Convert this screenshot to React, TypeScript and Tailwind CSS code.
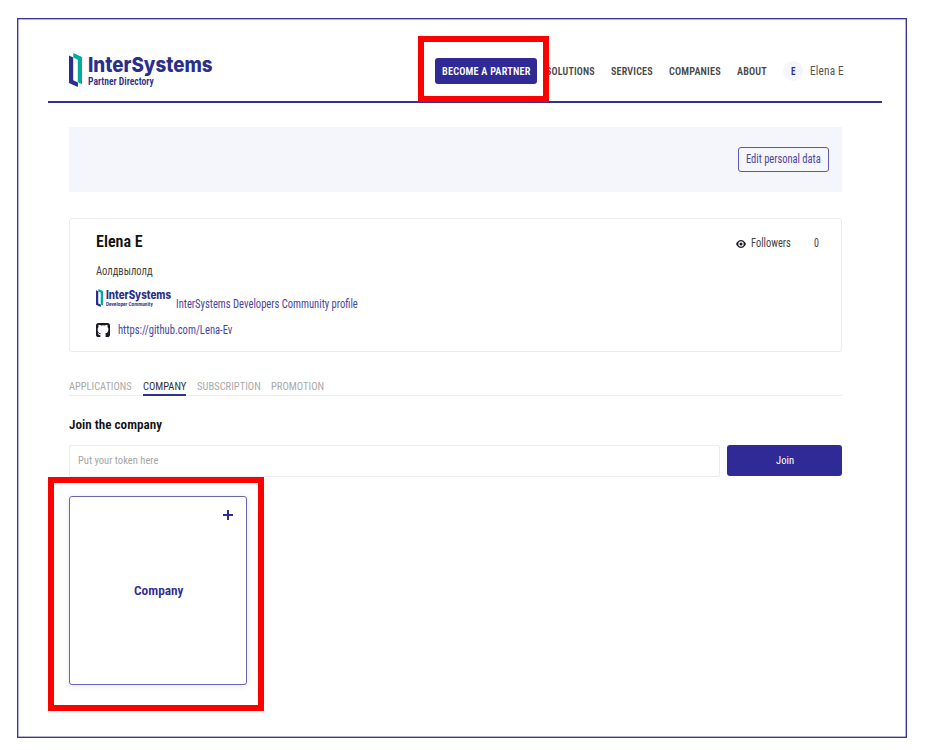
import { useLayoutEffect, useRef, useState } from "react";
import type { ReactNode } from "react";

/** Single line of condensed text that occupies exactly the given width. */
function Fit({ w, className = "", children }: { w: number; className?: string; children: ReactNode }) {
  const ref = useRef<HTMLSpanElement>(null);
  const [scale, setScale] = useState(1);
  useLayoutEffect(() => {
    if (ref.current) setScale(w / ref.current.offsetWidth);
  }, [w]);
  return (
    <span className={`block shrink-0 whitespace-nowrap ${className}`} style={{ width: w }}>
      <span ref={ref} className="inline-block origin-left" style={{ transform: `scaleX(${scale})` }}>
        {children}
      </span>
    </span>
  );
}

function Mark({ className }: { className: string }) {
  return (
    <svg viewBox="0 0 13 34" preserveAspectRatio="none" className={className}>
      <path d="M4.3 0 L13 4 V31.2 L8.8 29.3 V6.7 L4.3 4.6Z" fill="#00ab9f" />
      <path d="M0 2.4 L4.2 4.4 V27.2 L8.9 29.4 V34 L0 29.9Z" fill="#2a2f8c" />
    </svg>
  );
}

const navItems: [string, number][] = [
  ["SOLUTIONS", 49],
  ["SERVICES", 42],
  ["COMPANIES", 52],
  ["ABOUT", 30],
];

function Header() {
  return (
    <header className="ml-[30px] h-[84px] w-[834px] border-b-2 border-[#353192]">
      <div className="flex pl-[21px]">
        <div className="mt-[34px] flex h-[34px] w-[366px]">
          <Mark className="h-[34px] w-[13px]" />
          <div className="ml-[6px] pt-px">
            <Fit w={124.5} className="h-[22px] font-['Inter'] text-[20.5px] leading-[22px] font-extrabold text-[#2a2f8c]">InterSystems</Fit>
            <Fit w={66} className="h-3 text-[10.2px] leading-3 font-semibold text-[#2a2f8c]">Partner Directory</Fit>
          </div>
        </div>
        <nav className="mt-[39px] flex h-[26px] items-center text-[10.8px] leading-[15px] font-semibold tracking-[0.2px] text-[#484848]">
          <div className="flex h-[26px] w-[102px] items-center justify-center rounded-[3px] bg-[#2f2a95] text-white">
            <Fit w={88.5}>BECOME A PARTNER</Fit>
          </div>
          <div className="ml-[9px] flex gap-4">
            {navItems.map(([label, w]) => (
              <Fit key={label} w={w}>{label}</Fit>
            ))}
          </div>
          <div className="ml-4 flex size-5 items-center justify-center rounded-full bg-[#f5f6fb] text-[#2f2a95]">
            <Fit w={5}>E</Fit>
          </div>
          <Fit w={34} className="ml-[6.5px] -mt-px text-[12.6px] font-normal text-[#555]">Elena E</Fit>
        </nav>
      </div>
    </header>
  );
}

function Profile() {
  return (
    <section className="mt-[26px] flex h-[134px] justify-between rounded-[3px] border border-[#ececee] pr-[22px] pl-[26px] text-[12px] leading-[14px]">
      <div>
        <Fit w={46.5} className="mt-[13px] text-[16.6px] leading-5 font-semibold text-[#111]">Elena E</Fit>
        <Fit w={56.5} className="mt-[12px] text-[#444]">Аолдвылолд</Fit>
        <div className="mt-[11px] flex h-[19px]">
          <Mark className="h-[18px] w-[7px]" />
          <div className="ml-[3px]">
            <Fit w={65} className="h-[13px] font-['Inter'] text-[11.3px] leading-[13px] font-extrabold text-[#2a2f8c]">InterSystems</Fit>
            <Fit w={47} className="h-[5px] text-[5px] leading-[5px] font-semibold text-[#2a2f8c]">Developer Community</Fit>
          </div>
          <Fit w={181.5} className="mt-[8px] ml-[5px] text-[#4a459f]">InterSystems Developers Community profile</Fit>
        </div>
        <div className="mt-[15px] flex items-center gap-[8px] text-[#4a459f]">
          <svg viewBox="0 0 14 14" className="h-[14px] w-[14px]">
            <path fill="#181824" d="M2.6 0H11.4Q14 0 14 2.6V11.4Q14 14 11.4 14H9.6V11.6Q9.6 10.9 9.2 10.4Q12.4 9.7 12.4 6.4Q12.4 4.8 11.5 3.9Q11.8 2.7 11.3 1.7Q10 1.7 8.8 2.5Q7 2.1 5.2 2.5Q4 1.7 2.7 1.7Q2.2 2.7 2.5 3.9Q1.6 4.8 1.6 6.4Q1.6 9.7 4.8 10.4Q4.5 10.8 4.4 11.2Q3.4 11.4 2.7 10.3Q2.2 9.6 1.6 9.7Q2 10.3 2.4 11.2Q3 12.5 4.4 12.3V14H2.6Q0 14 0 11.4V2.6Q0 0 2.6 0Z" />
          </svg>
          <Fit w={114}>https://github.com/Lena-Ev</Fit>
        </div>
      </div>
      <div className="mt-[17px] flex h-[14px] items-center text-[#444]">
        <svg viewBox="0 0 10 8" className="mt-px h-2 w-[10px]">
          <path d="M0 4Q2 0 5 0T10 4Q8 8 5 8T0 4Z" fill="#181824" />
          <circle cx="5" cy="4" r="2.7" fill="white" />
          <circle cx="5" cy="4" r="1.5" fill="#181824" />
        </svg>
        <Fit w={40} className="ml-[5px]">Followers</Fit>
        <Fit w={5} className="ml-[23px]">0</Fit>
      </div>
    </section>
  );
}

function Tabs() {
  return (
    <div className="mt-[27px] flex h-[17px] gap-[10.7px] border-b border-[#ececee] text-[11.6px] leading-[14px] text-[#a9a9a9]">
      <Fit w={63}>APPLICATIONS</Fit>
      <Fit w={43.5} className="h-[17px] border-b-2 border-[#2f3192] text-[#333]">COMPANY</Fit>
      <Fit w={63.7}>SUBSCRIPTION</Fit>
      <Fit w={53}>PROMOTION</Fit>
    </div>
  );
}

export default function App() {
  return (
    <div className="relative h-[750px] w-[925px] overflow-hidden bg-white pt-[18px] pl-[17px] font-['Roboto_Condensed','Roboto',sans-serif] [font-stretch:75%]">
      <div className="h-[720px] w-[890px] border-[1.5px] border-[#3b3798] shadow-[inset_0_0_0_0.5px_#6b68b5]">
        <Header />
        <main className="ml-[51px] w-[773px]">
          <div className="mt-[24px] flex h-[65px] items-center justify-end bg-[#f5f6fb] pr-[13px]">
            <div className="flex h-[25px] w-[91px] items-center justify-center rounded-[3px] border border-[#5c57ac] text-[12px] leading-[14px] text-[#4a459f]">
              <Fit w={75} className="-mt-[2px]">Edit personal data</Fit>
            </div>
          </div>
          <Profile />
          <Tabs />
          <Fit w={93} className="mt-[20px] text-[13.6px] leading-4 font-semibold text-[#111]">Join the company</Fit>
          <div className="mt-[13px] flex gap-[7px] text-[11.8px] leading-[14px]">
            <div className="flex h-8 flex-1 items-center rounded-[2px] border border-[#ececee] pl-2 text-[#a5a5a5]">
              <Fit w={80.5} className="-mt-[3px]">Put your token here</Fit>
            </div>
            <div className="flex h-[31px] w-[115px] items-center justify-center rounded-[3px] bg-[#2f2a95] text-white">
              <Fit w={18} className="-mt-[2px]">Join</Fit>
            </div>
          </div>
          <div className="mt-[19px] flex h-[189px] w-[178px] flex-col items-center rounded-[3px] border border-[#6a66b2] shadow-[0_1px_6px_rgba(0,0,0,0.1)]">
            <svg viewBox="0 0 10 10" className="mt-[13px] mr-[13px] size-[10px] self-end" fill="#2f2a95">
              <path d="M4 0H6V4H10V6H6V10H4V6H0V4H4Z" />
            </svg>
            <Fit w={49} className="mt-[62px] text-[13.6px] leading-4 font-semibold text-[#2f2a95]">Company</Fit>
          </div>
        </main>
      </div>
      <div className="absolute top-[36px] left-[418px] h-[66px] w-[131px] border-6 border-[#ff0000]" />
      <div className="absolute top-[477px] left-[48px] h-[234px] w-[216px] border-6 border-[#ff0000]" />
    </div>
  );
}
